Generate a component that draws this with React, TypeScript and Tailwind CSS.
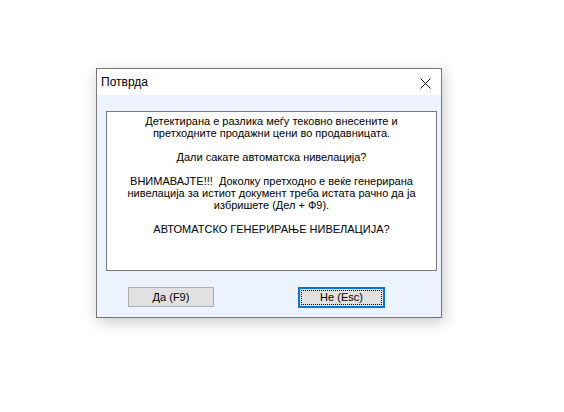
import React from "react";

const lines: string[] = [
  "Детектирана е разлика меѓу тековно внесените и",
  "претходните продажни цени во продавницата.",
  "",
  "Дали сакате автоматска нивелација?",
  "",
  "ВНИМАВАЈТЕ!!!  Доколку претходно е веќе генерирана",
  "нивелација за истиот документ треба истата рачно да ја",
  "избришете (Дел + Ф9).",
  "",
  "АВТОМАТСКО ГЕНЕРИРАЊЕ НИВЕЛАЦИЈА?",
];

const App: React.FC = () => {
  return (
    <div className="w-[564px] h-[412px] bg-white pl-[96px] pt-[68px] font-['Liberation_Sans',Arial,sans-serif]">
      <div className="w-[346px] h-[250px] flex flex-col border border-[#777777] bg-white shadow-[2px_4px_14px_rgba(0,0,0,0.22)]">
        {/* title bar */}
        <div className="h-[26px] flex items-center justify-between pl-[4px] pr-[10px] bg-white">
          <span className="text-[12px] text-black leading-none">Потврда</span>
          <svg width="11" height="11" viewBox="0 0 11 11" className="mt-[2px]">
            <path d="M0.5 0.5 L10.5 10.5 M10.5 0.5 L0.5 10.5" stroke="#111" strokeWidth="1" fill="none" />
          </svg>
        </div>

        {/* body */}
        <div className="flex-1 bg-[#EDF3FE] pl-[9px] pt-[16px]">
          <div className="w-[331px] h-[160px] border border-[#7a7a7a] bg-white pt-[3px]">
            {lines.map((l, i) => (
              <div
                key={i}
                className="h-[12px] text-[11px] leading-[12px] text-black text-center whitespace-pre"
              >
                {l}
              </div>
            ))}
          </div>

          <div className="flex mt-[16px]">
            <button className="ml-[22px] w-[86px] h-[20px] bg-[#e1e1e1] border border-[#adadad] text-[11px] text-black leading-none">
              Да (F9)
            </button>
            <button className="ml-[84px] w-[87px] h-[21px] bg-[#e1e1e1] border-2 border-[#0078d7] p-[1px] text-[11px] text-black leading-none">
              <span className="flex items-center justify-center w-full h-full border border-dotted border-black">
                Не (Esc)
              </span>
            </button>
          </div>
        </div>
      </div>
    </div>
  );
};

export default App;
